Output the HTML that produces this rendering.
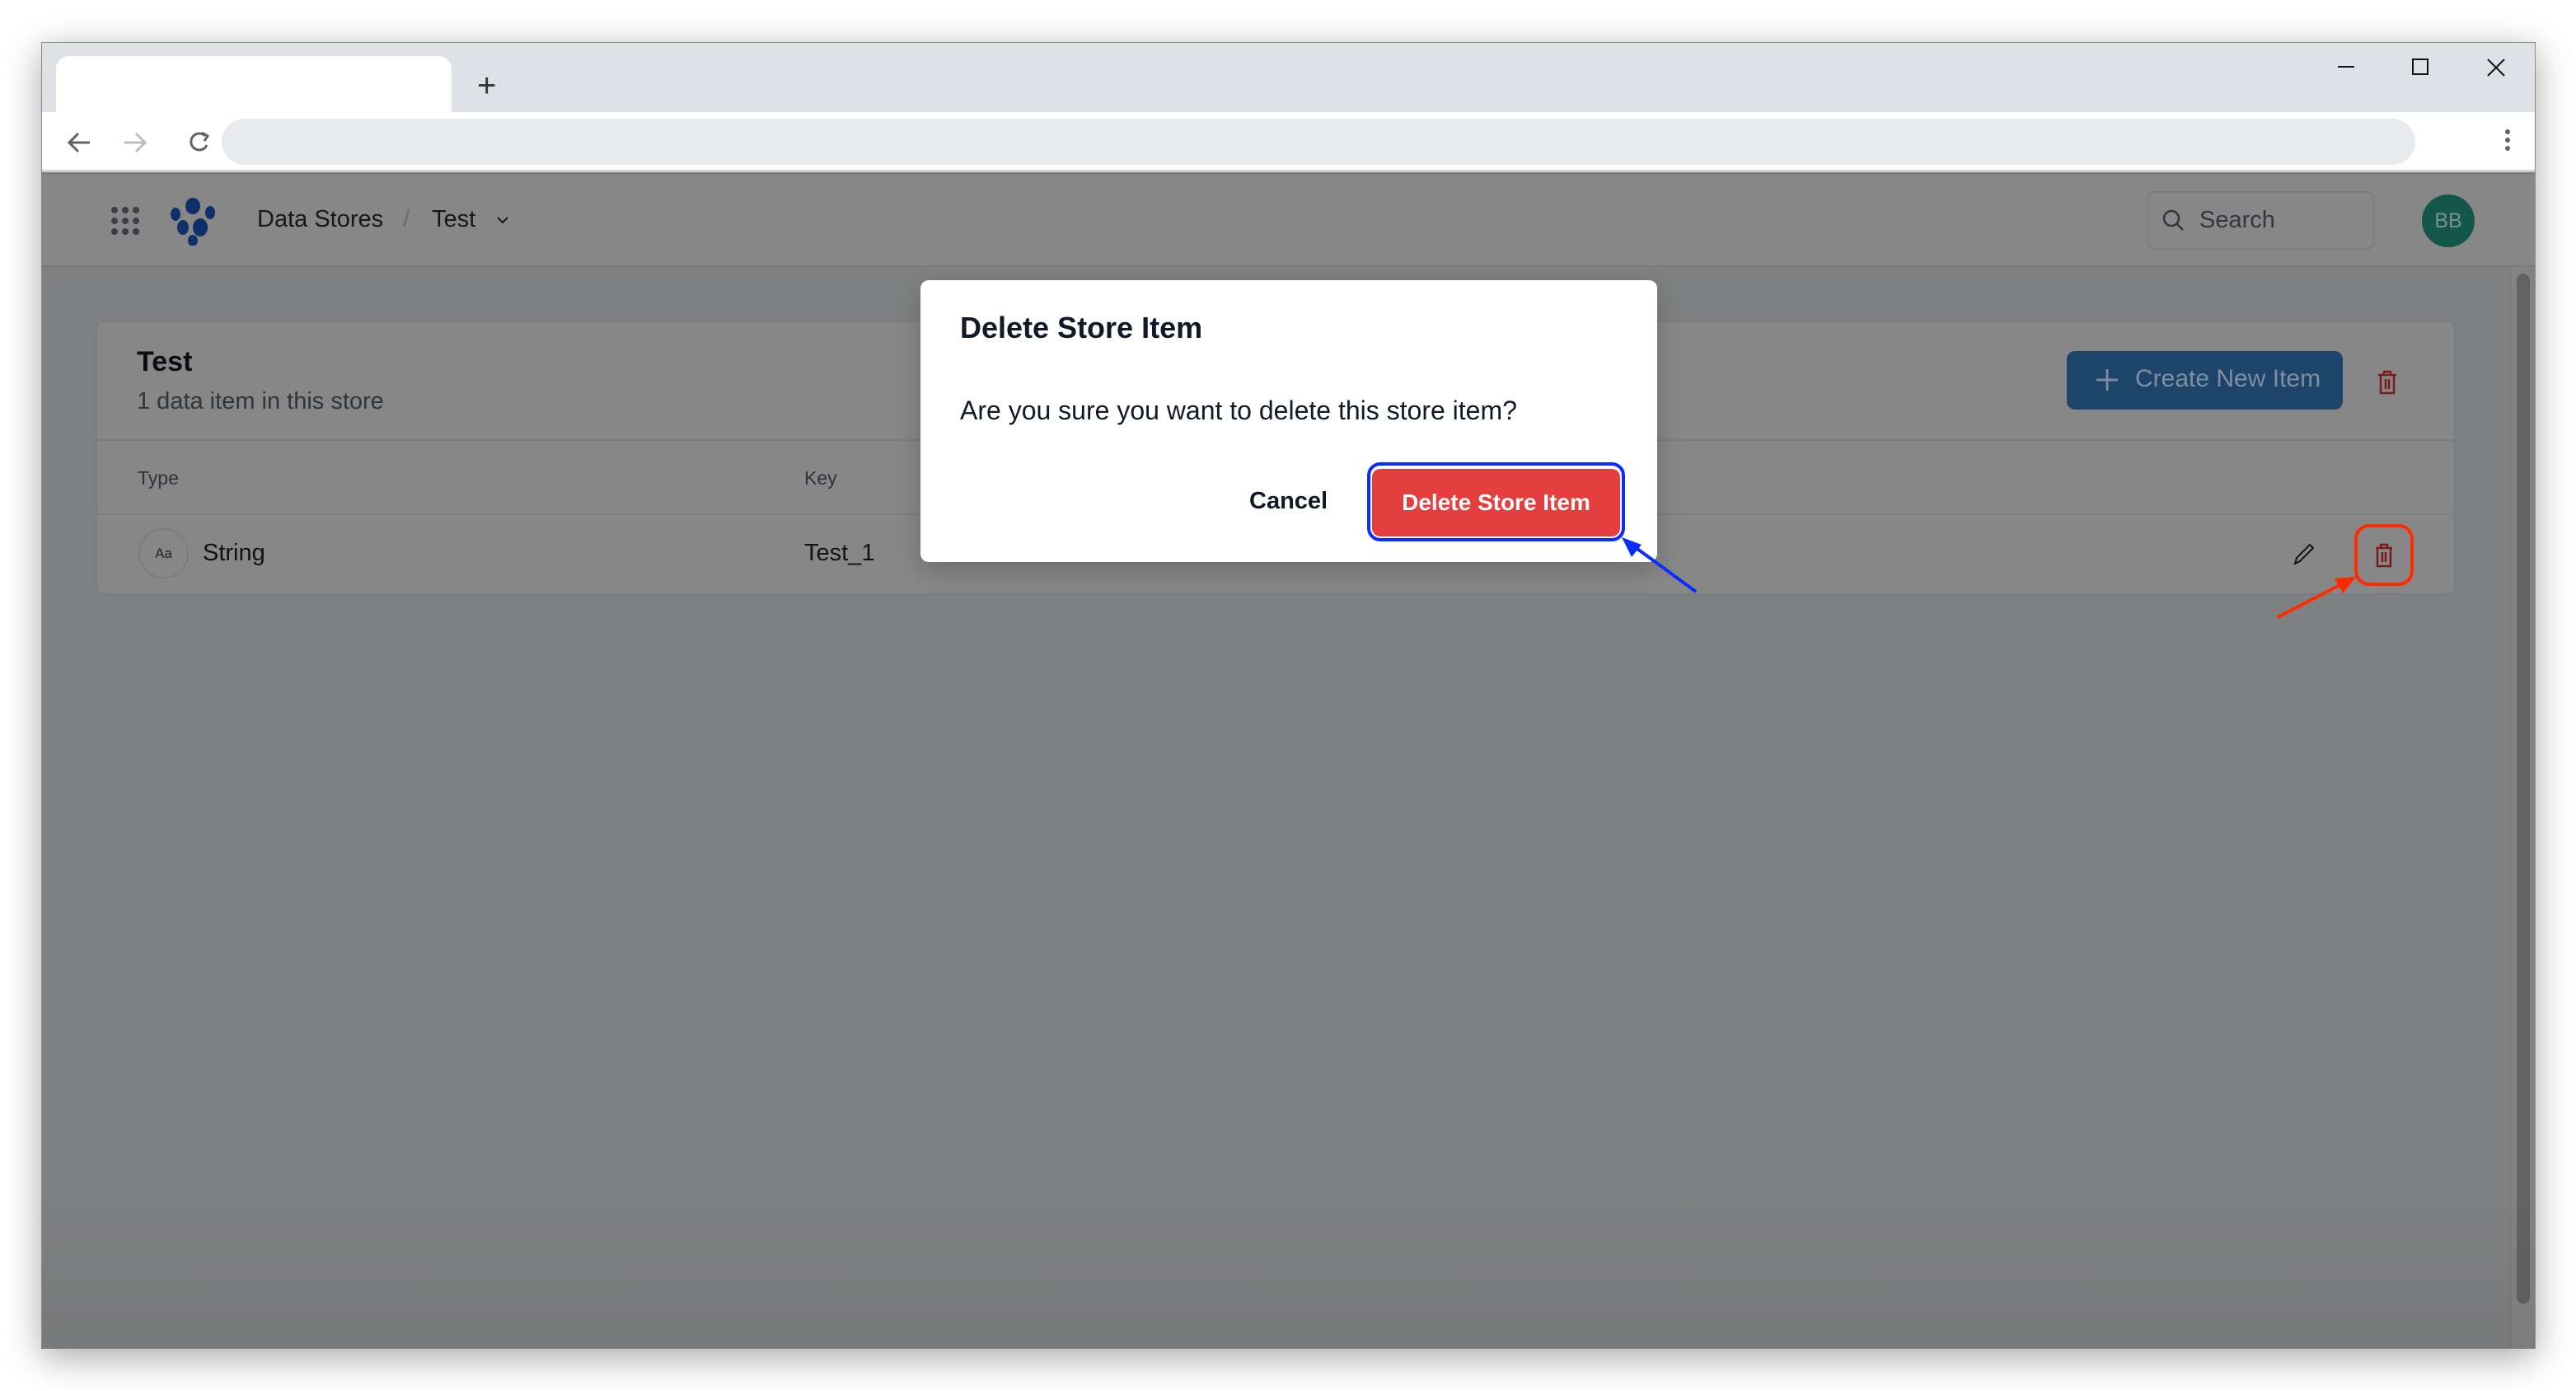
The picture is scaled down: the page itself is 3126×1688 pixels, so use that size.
<!DOCTYPE html>
<html><head><meta charset="utf-8"><style>
*{margin:0;padding:0;box-sizing:border-box}
body{width:3126px;height:1688px;background:#fff;position:relative;overflow:hidden;font-family:"Liberation Sans",sans-serif}
.a{position:absolute}
#win{left:50px;top:51px;width:3027px;height:1586px;box-shadow:0 10px 40px rgba(0,0,0,.35);border:1px solid #8a8a8a;background:#7f8081;overflow:hidden}
</style></head><body>
<div id="win" class="a">
 <div class="a" style="left:0;top:0;width:3027px;height:84px;background:#dee1e6"></div>
 <div class="a" style="left:17px;top:16px;width:480px;height:70px;background:#fff;border-radius:16px 16px 0 0"></div>
 <div class="a" style="left:528px;top:30px;font-size:40px;color:#333">+</div>
 <div class="a" style="left:2786px;top:28px;width:20px;height:2px;background:#111"></div>
 <div class="a" style="left:2876px;top:19px;width:20px;height:20px;border:2px solid #111"></div>
 <svg class="a" style="left:2966px;top:18px" width="24" height="24"><path d="M2 2L22 22M22 2L2 22" stroke="#111" stroke-width="2"/></svg>
 <div class="a" style="left:0;top:84px;width:3027px;height:73px;background:#fff;border-bottom:3px solid #cfd1d4"></div>
 <svg class="a" style="left:28px;top:104px" width="200" height="34" fill="none" stroke-width="3">
  <path d="M30 17H6M16 6L5 17L16 28" stroke="#5f6368"/>
  <path d="M72 17H96M86 6L97 17L86 28" stroke="#bdbdbd"/>
  <path d="M170 9A10 10 0 1 0 172 20" stroke="#5f6368"/><path d="M166 5L173 9L169 15" stroke="#5f6368"/>
 </svg>
 <div class="a" style="left:218px;top:92px;width:2662px;height:56px;background:#e8eaed;border-radius:28px"></div>
 <div class="a" style="left:2989px;top:105px;width:6px;height:6px;border-radius:50%;background:#5f6368;box-shadow:0 10px 0 #5f6368,0 20px 0 #5f6368"></div>
 <!-- header -->
 <div class="a" style="left:0;top:160px;width:3027px;height:112px;background:#878787;border-bottom:2px solid #7a7a7a"></div>
 <svg class="a" style="left:84px;top:199px" width="36" height="36" fill="#3a3f47"><circle cx="4" cy="4" r="4"/><circle cx="17" cy="4" r="4"/><circle cx="30" cy="4" r="4"/><circle cx="4" cy="17" r="4"/><circle cx="17" cy="17" r="4"/><circle cx="30" cy="17" r="4"/><circle cx="4" cy="30" r="4"/><circle cx="17" cy="30" r="4"/><circle cx="30" cy="30" r="4"/></svg>
 <svg class="a" style="left:154px;top:188px" width="58" height="58" fill="#10306a"><ellipse cx="29" cy="10" rx="9" ry="10"/><ellipse cx="8" cy="20" rx="6" ry="8"/><ellipse cx="50" cy="18" rx="6" ry="8"/><ellipse cx="17" cy="36" rx="7" ry="9"/><ellipse cx="38" cy="36" rx="9" ry="11"/><ellipse cx="29" cy="52" rx="6" ry="7"/></svg>
 <div class="a" style="left:261px;top:198px;font-size:29px;color:#16181c">Data Stores</div>
 <div class="a" style="left:438px;top:197px;font-size:30px;color:#6a6d72">/</div>
 <div class="a" style="left:473px;top:198px;font-size:29px;color:#16181c">Test</div>
 <svg class="a" style="left:550px;top:208px" width="18" height="14"><path d="M3 4L9 10L15 4" stroke="#16181c" stroke-width="2" fill="none"/></svg>
 <div class="a" style="left:2554px;top:180px;width:277px;height:71px;border:2px solid #7b7d82;border-radius:10px"></div>
 <svg class="a" style="left:2572px;top:201px" width="30" height="30" fill="none" stroke="#32363c" stroke-width="2.5"><circle cx="12" cy="12" r="9"/><path d="M19 19L26 26"/></svg>
 <div class="a" style="left:2618px;top:199px;font-size:29px;color:#33373d">Search</div>
 <div class="a" style="left:2888px;top:184px;width:64px;height:64px;border-radius:50%;background:#13564a;color:#7c8f8a;font-size:25px;line-height:64px;text-align:center">BB</div>
 <!-- scrollbar -->
 <div class="a" style="left:2995px;top:274px;width:32px;height:1312px;background:#838383;border-left:1px solid #777"></div>
 <div class="a" style="left:3003px;top:280px;width:16px;height:1250px;background:#626262;border-radius:8px"></div>
 <!-- card -->
 <div class="a" style="left:65px;top:337px;width:2864px;height:333px;background:#878787;border:2px solid #7b7c7f;border-radius:10px"></div>
 <div class="a" style="left:115px;top:368px;font-size:34px;font-weight:bold;color:#0b0d12">Test</div>
 <div class="a" style="left:115px;top:419px;font-size:29px;color:#30353c">1 data item in this store</div>
 <div class="a" style="left:2457px;top:374px;width:335px;height:71px;background:#1e4469;border-radius:10px"></div>
 <svg class="a" style="left:2490px;top:393px" width="32" height="32"><path d="M16 3V29M3 16H29" stroke="#7a8aa0" stroke-width="3"/></svg>
 <div class="a" style="left:2540px;top:391px;font-size:30px;color:#7f8ea3">Create New Item</div>
 <svg class="a" style="left:2833px;top:397px" width="26" height="30" fill="none" stroke="#7a1a1a" stroke-width="2.5"><path d="M2 6H24M9 6V2H17V6M5 6V28H21V6M11 11V23M15 11V23"/></svg>
 <div class="a" style="left:67px;top:481px;width:2860px;height:2px;background:#7b7c7f"></div>
 <div class="a" style="left:116px;top:515px;font-size:23px;color:#2f333a">Type</div>
 <div class="a" style="left:925px;top:515px;font-size:23px;color:#2f333a">Key</div>
 <div class="a" style="left:67px;top:571px;width:2860px;height:2px;background:#7d7e80"></div>
 <div class="a" style="left:117px;top:589px;width:61px;height:61px;border:2px solid #7a7c80;border-radius:50%;font-size:17px;line-height:57px;text-align:center;color:#222">Aa</div>
 <div class="a" style="left:195px;top:603px;font-size:29px;color:#111">String</div>
 <div class="a" style="left:925px;top:603px;font-size:29px;color:#111">Test_1</div>
 <svg class="a" style="left:2730px;top:605px" width="30" height="30" fill="none" stroke="#111" stroke-width="2"><path d="M4 27L6 20L22 4L26 8L10 24Z"/></svg>
 <div class="a" style="left:2806px;top:584px;width:72px;height:75px;border:4px solid #ff2a00;border-radius:18px"></div>
 <svg class="a" style="left:2830px;top:607px" width="24" height="30" fill="none" stroke="#7a1a1a" stroke-width="2.5"><path d="M2 6H22M8 6V2H16V6M4 6V28H20V6M10 11V23M14 11V23"/></svg>
 <div class="a" style="left:0;top:1400px;width:3027px;height:186px;background:linear-gradient(transparent,rgba(0,0,0,.06))"></div>
 <!-- modal -->
 <div class="a" style="left:1066px;top:288px;width:894px;height:342px;background:#fff;border-radius:10px;box-shadow:0 10px 30px rgba(0,0,0,.2)"></div>
 <div class="a" style="left:1114px;top:325px;font-size:36px;font-weight:bold;color:#111827">Delete Store Item</div>
 <div class="a" style="left:1114px;top:428px;font-size:32px;color:#111827">Are you sure you want to delete this store item?</div>
 <div class="a" style="left:1465px;top:540px;font-size:29px;font-weight:bold;color:#111827">Cancel</div>
 <div class="a" style="left:1608px;top:509px;width:313px;height:96px;border:4px solid #0a2cff;border-radius:16px"></div>
 <div class="a" style="left:1614px;top:517px;width:301px;height:82px;background:#e43e3e;border-radius:10px;color:#fff;font-size:28px;font-weight:bold;line-height:82px;text-align:center">Delete Store Item</div>
 <svg class="a" style="left:0;top:0" width="3027" height="1586"><path d="M2713 697L2800 652" stroke="#ff2a00" stroke-width="4"/><path d="M2808 648L2782 650L2792 668Z" fill="#ff2a00"/>
 <path d="M2007 666L1925 606" stroke="#0a2cff" stroke-width="4"/><path d="M1917 600L1929 624L1941 609Z" fill="#0a2cff"/></svg>
</div>
</body></html>
